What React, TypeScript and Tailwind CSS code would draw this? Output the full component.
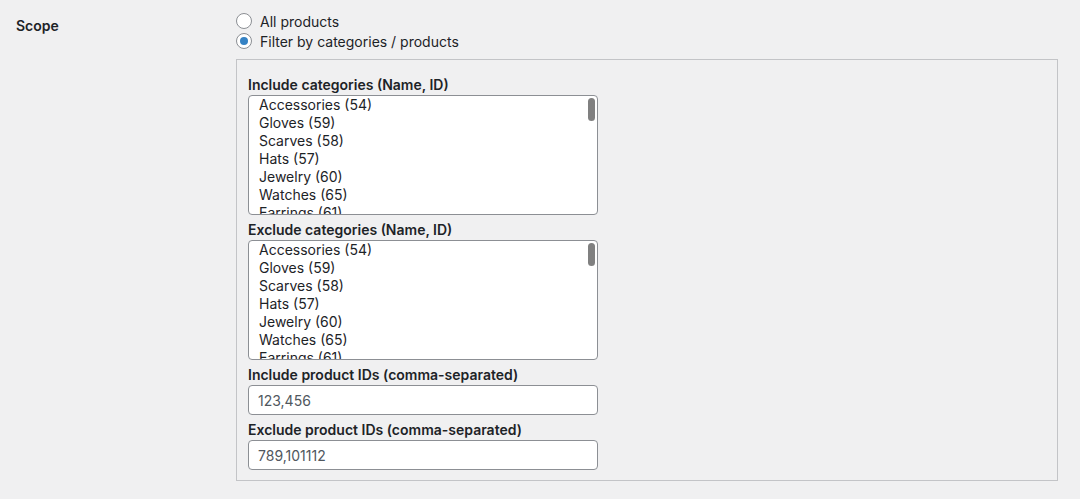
import React from 'react';

const categories = [
  'Accessories (54)',
  'Gloves (59)',
  'Scarves (58)',
  'Hats (57)',
  'Jewelry (60)',
  'Watches (65)',
  'Earrings (61)',
];

function Radio({ checked, label }: { checked?: boolean; label: string }) {
  return (
    <label className="flex h-5 items-center gap-2">
      <span className="flex h-4 w-4 items-center justify-center rounded-full border border-[#8c8f94] bg-white">
        {checked && <span className="h-2 w-2 rounded-full bg-[#3582c4]" />}
      </span>
      <span>{label}</span>
    </label>
  );
}

function CategoryList() {
  return (
    <div className="relative h-[120px] w-[350px] overflow-hidden rounded-[4px] border border-[#8c8f94] bg-white">
      <ul className="pl-[10px] pt-0 leading-[18px] text-[#1d2327]">
        {categories.map((c) => (
          <li key={c}>{c}</li>
        ))}
      </ul>
      {/* scrollbar thumb */}
      <div className="absolute right-[2px] top-[2px] h-[23px] w-[7px] rounded-full bg-[#808080]" />
    </div>
  );
}

function FieldLabel({ children, first }: { children: React.ReactNode; first?: boolean }) {
  return (
    <div className={`${first ? '' : 'mt-[5px]'} font-semibold leading-5 text-[#1d2327]`}>
      {children}
    </div>
  );
}

function TextInput({ value }: { value: string }) {
  return (
    <div className="flex h-[30px] w-[350px] items-center rounded-[4px] border border-[#8c8f94] bg-white pl-[9px] text-[#50575e]">
      {value}
    </div>
  );
}

export default function App() {
  return (
    <div className="min-h-[499px] bg-[#f0f0f1] font-['Inter','Liberation_Sans',sans-serif] text-[14px] text-[#1d2327]">
      <div className="flex">
        <div className="w-[236px] pl-4 pt-[16px] font-semibold leading-5">Scope</div>
        <div className="pt-[11px]">
          <Radio label="All products" />
          <Radio checked label="Filter by categories / products" />
          <div className="mt-[8px] w-[822px] border border-[#c3c4c7] pb-[10px] pl-[11px] pt-[15px]">
            <FieldLabel first>Include categories (Name, ID)</FieldLabel>
            <CategoryList />
            <FieldLabel>Exclude categories (Name, ID)</FieldLabel>
            <CategoryList />
            <FieldLabel>Include product IDs (comma-separated)</FieldLabel>
            <TextInput value="123,456" />
            <FieldLabel>Exclude product IDs (comma-separated)</FieldLabel>
            <TextInput value="789,101112" />
          </div>
        </div>
      </div>
    </div>
  );
}
